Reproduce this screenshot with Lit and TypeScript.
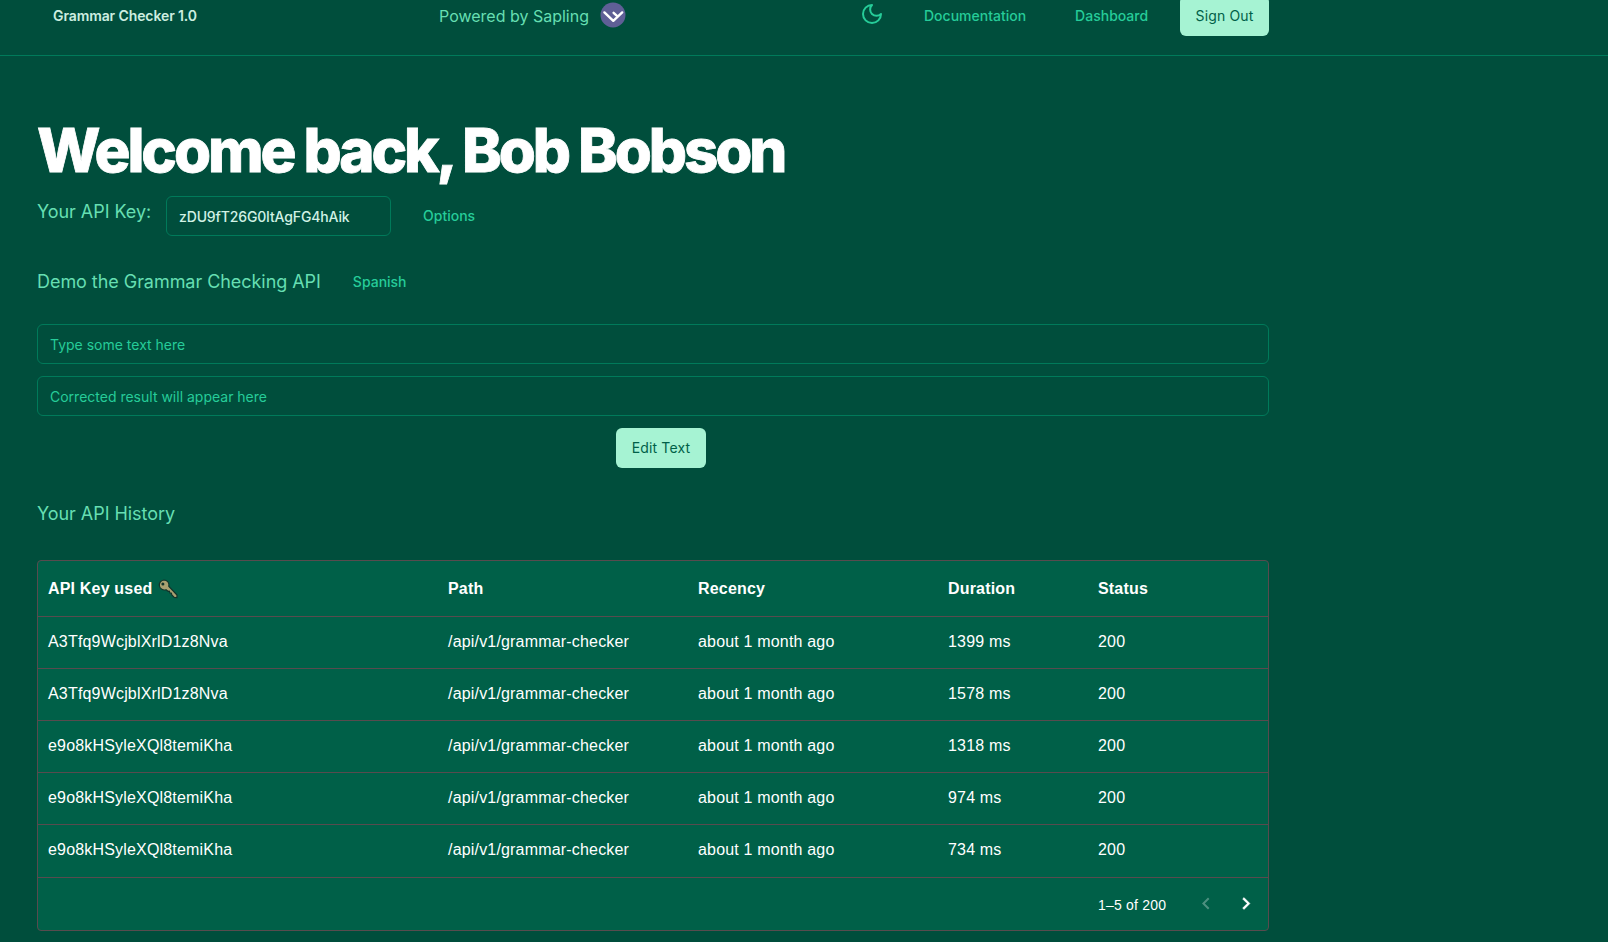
import { LitElement, html, css } from "lit";
import { customElement } from "lit/decorators.js";

const ROWS = [
  ["A3Tfq9WcjblXrlD1z8Nva", "1399 ms"],
  ["A3Tfq9WcjblXrlD1z8Nva", "1578 ms"],
  ["e9o8kHSyleXQl8temiKha", "1318 ms"],
  ["e9o8kHSyleXQl8temiKha", "974 ms"],
  ["e9o8kHSyleXQl8temiKha", "734 ms"],
];

@customElement("app-root")
class AppRoot extends LitElement {
  static styles = css`
    :host {
      display: block;
      height: 942px;
      overflow: hidden;
      background: #004e3c;
      color: #66dfb2;
      font-family: Inter, sans-serif;
    }
    * { box-sizing: border-box; }
    h1, h2, p { margin: 0; font-weight: 400; }
    header {
      height: 56px;
      border-bottom: 1px solid #007a5a;
      overflow: hidden;
    }
    .bar {
      width: 1269px;
      height: 40px;
      margin-top: -4px;
      display: flex;
      align-items: center;
      font-size: 14px;
    }
    .bar .brand, .bar .link { padding-bottom: 2px; }
    .brand {
      width: 386px;
      margin-left: 53px;
      color: #cdeee0;
      font-weight: 600;
      letter-spacing: -0.1px;
    }
    .powered {
      width: 423px;
      display: flex;
      align-items: center;
      gap: 12px;
      font-size: 16px;
    }
    svg { display: block; flex: none; }
    .logo { margin: -2px 0 0 -1px; }
    .moon { margin: -4px 40px 0 -2px; }
    .link { color: #26cc99; font-weight: 500; font-size: 14px; }
    .dash { margin-left: 49px; }
    .btn {
      height: 40px;
      border: 0;
      padding: 0 0 1px;
      border-radius: 6px;
      background: #a6f3d3;
      color: #006048;
      font: 400 14px Inter, sans-serif;
      letter-spacing: 0.15px;
      text-align: center;
      white-space: nowrap;
    }
    .out { margin-left: auto; width: 89px; padding-bottom: 2px; }
    main { padding: 64px 0 0 37px; width: 1269px; }
    h1 {
      font-size: 60px;
      line-height: 60px;
      font-weight: 800;
      letter-spacing: -3.1px;
      -webkit-text-stroke: 0.8px #fff;
      color: #fff;
      white-space: nowrap;
    }
    h2 { font-size: 18px; line-height: 28px; letter-spacing: -0.05px; white-space: nowrap; }
    .key { display: flex; align-items: flex-start; margin-top: 16px; height: 40px; }
    .key h2 { width: 129px; padding-top: 2px; }
    .field {
      display: flex;
      align-items: center;
      height: 40px;
      width: 100%;
      padding: 1px 12px 0;
      border: 1px solid #007a5a;
      border-radius: 6px;
      color: #26cc99;
      font-size: 14px;
    }
    .key .field { width: 225px; color: #d1f2e5; font-weight: 500; letter-spacing: -0.14px; }
    .key .link { margin: 10px 0 0 32px; line-height: 20px; }
    .demo { display: flex; align-items: center; margin-top: 32px; height: 28px; }
    .demo .link { margin-left: 32px; padding-bottom: 1px; }
    .form { display: flex; flex-direction: column; gap: 12px; margin-top: 28px; }
    .edit { margin-left: 579px; width: 90px; align-self: flex-start; }
    .history { margin-top: 32px; }
    .grid {
      margin-top: 32px;
      height: 371px;
      border: 1px solid #584b4e;
      border-radius: 4px;
      background: #006048;
      color: #fff;
      font: 16px "Liberation Sans", Arial, sans-serif;
      letter-spacing: 0.18px;
      font-kerning: none;
    }
    .row {
      display: grid;
      grid-template-columns: 400px 250px 250px 150px 1fr;
      padding-left: 10px;
      height: 52px;
      line-height: 50px;
      border-bottom: 1px solid #584b4e;
      white-space: nowrap;
    }
    .row.last { height: 53px; }
    .head { height: 56px; line-height: 55px; font-weight: 700; }
    .withkey { display: flex; align-items: center; gap: 6px; }
    .foot { display: flex; align-items: center; height: 52px; padding-left: 1060px; font-size: 14px; letter-spacing: 0.2px; }
    .count { width: 96px; padding-top: 2px; }
    .pager { display: flex; gap: 16px; }
    .off { opacity: 0.3; }
  `;

  render() {
    return html`
      <header>
        <div class="bar">
          <div class="brand">Grammar Checker 1.0</div>
          <div class="powered">
            <span>Powered by Sapling</span>
            <svg class="logo" width="26" height="26" viewBox="0 0 26 26">
              <circle cx="13" cy="13" r="12.5" fill="#5f5f96" />
              <path d="M4.4 10.4 13.3 18.8 22.2 10.4M13.6 10.8l3.6 3.4" fill="none" stroke="#fff" stroke-width="2.4" stroke-linecap="round" stroke-linejoin="round" />
            </svg>
          </div>
          <svg class="moon" width="24" height="24" viewBox="0 0 24 24" fill="none" stroke="#26cc99" stroke-width="2" stroke-linecap="round" stroke-linejoin="round">
            <path d="M12 3a6 6 0 0 0 9 9 9 9 0 1 1-9-9Z" />
          </svg>
          <span class="link">Documentation</span>
          <span class="link dash">Dashboard</span>
          <button class="btn out">Sign Out</button>
        </div>
      </header>
      <main>
        <h1>Welcome back, Bob Bobson</h1>
        <div class="key">
          <h2>Your API Key:</h2>
          <div class="field">zDU9fT26G0ItAgFG4hAik</div>
          <span class="link">Options</span>
        </div>
        <div class="demo">
          <h2>Demo the Grammar Checking API</h2>
          <span class="link">Spanish</span>
        </div>
        <div class="form">
          <div class="field">Type some text here</div>
          <div class="field">Corrected result will appear here</div>
          <button class="btn edit">Edit Text</button>
        </div>
        <h2 class="history">Your API History</h2>
        <div class="grid">
          <div class="row head">
            <div class="withkey">
              <span>API Key used</span>
              <svg width="20" height="20" viewBox="0 0 20 20">
                <path d="M6 1A5 5 0 1 0 8 10.700L10 12.300 11.400 12.200 11.800 13.900 13.400 14.200 13.800 15.800 16.200 18.400 18.900 18.600 19 16 10.800 7.400A5 5 0 0 0 6 1Z" fill="#a9a070" stroke="#12332a" stroke-width="1.200" stroke-linejoin="round" />
                <circle cx="4.900" cy="4.900" r="1.500" fill="#12332a" />
              </svg>
            </div>
            <div>Path</div>
            <div>Recency</div>
            <div>Duration</div>
            <div>Status</div>
          </div>
          ${ROWS.map(
            ([key, duration], i) => html`
              <div class="row ${i === ROWS.length - 1 ? "last" : ""}">
                <div>${key}</div>
                <div>/api/v1/grammar-checker</div>
                <div>about 1 month ago</div>
                <div>${duration}</div>
                <div>200</div>
              </div>
            `
          )}
          <div class="foot">
            <span class="count">1–5 of 200</span>
            <div class="pager">
              <svg class="off" width="24" height="24" viewBox="0 0 24 24" fill="#fff"><path d="M15.41 16.09l-4.58-4.59 4.58-4.59L14 5.5l-6 6 6 6z" /></svg>
              <svg width="24" height="24" viewBox="0 0 24 24" fill="#fff" stroke="#fff" stroke-width="0.4"><path d="M8.59 16.09l4.58-4.59-4.58-4.59L10 5.5l6 6-6 6z" /></svg>
            </div>
          </div>
        </div>
      </main>
    `;
  }
}
